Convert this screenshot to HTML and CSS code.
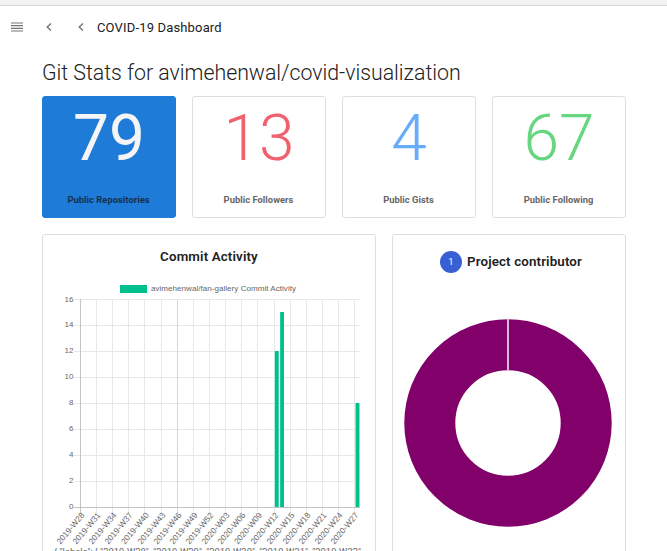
FILE: index.html
```
<!DOCTYPE html>
<html lang="en">
<head>
<meta charset="utf-8">
<title>COVID-19 Dashboard</title>
<link rel="stylesheet" href="styles.css">
</head>
<body>
<header class="bar">
  <svg class="menu" width="12" height="10" viewBox="0 0 12 10"><path d="M0 1h12M0 3.700h12M0 6.300h12M0 9h12"/></svg>
  <svg class="chev" width="6" height="8" viewBox="0 0 6 8"><path d="M5 .5L1.2 4 5 7.5"/></svg>
  <svg class="chev" width="6" height="8" viewBox="0 0 6 8"><path d="M5 .5L1.2 4 5 7.5"/></svg>
  <span class="name">COVID-19 Dashboard</span>
</header>
<main>
  <h1>Git Stats for avimehenwal/covid-visualization</h1>
  <section class="stats">
    <article class="card stat repos"><strong>79</strong><span>Public Repositories</span></article>
    <article class="card stat followers"><strong>13</strong><span>Public Followers</span></article>
    <article class="card stat gists"><strong>4</strong><span>Public Gists</span></article>
    <article class="card stat following"><strong>67</strong><span>Public Following</span></article>
  </section>
  <section class="charts">
    <article class="card commits">
      <h2>Commit Activity</h2>
      <svg class="plot" width="332" height="265" viewBox="43 280 332 265">
        <rect class="green" x="120" y="285" width="27" height="8"/>
        <text x="151" y="291.4" textLength="145">avimehenwal/fan-gallery Commit Activity</text>
        <path class="grid" d="M74 299.5H360M74 325.5H360M74 351.5H360M74 377.5H360M74 403.5H360M74 429.5H360M74 455.5H360M74 481.5H360M96.5 299V513M112.5 299V513M128.5 299V513M144.5 299V513M161.5 299V513M193.5 299V513M209.5 299V513M225.5 299V513M241.5 299V513M257.5 299V513M274.5 299V513M290.5 299V513M306.5 299V513M322.5 299V513M338.5 299V513M354.5 299V513"/>
        <path class="grid mid" d="M177.5 299V513"/>
        <path class="grid axis" d="M80.5 299V513M74 507.5H360"/>
        <path class="halo" d="M274 351h5v156h-5zM280 312h4v195h-4zM355 403h5v104h-5z"/>
        <path class="green" d="M275 351h3.6v156H275zM280.2 312h3.8v195h-3.8zM355.8 403h3.4v104h-3.4z"/>
        <g class="ticks">
          <text x="73.500" y="302">16</text><text x="73.500" y="327">14</text><text x="73.500" y="353">12</text><text x="73.500" y="379">10</text><text x="73.500" y="405">8</text><text x="73.500" y="431">6</text><text x="73.500" y="457">4</text><text x="73.500" y="483">2</text><text x="73.500" y="509">0</text>
        </g>
        <g class="ticks weeks">
          <text transform="translate(85 515.500) rotate(-50)">2019-W28</text>
          <text transform="translate(101 515.500) rotate(-50)">2019-W31</text>
          <text transform="translate(117 515.500) rotate(-50)">2019-W34</text>
          <text transform="translate(133 515.500) rotate(-50)">2019-W37</text>
          <text transform="translate(149.500 515.500) rotate(-50)">2019-W40</text>
          <text transform="translate(166 515.500) rotate(-50)">2019-W43</text>
          <text transform="translate(182 515.500) rotate(-50)">2019-W46</text>
          <text transform="translate(198 515.500) rotate(-50)">2019-W49</text>
          <text transform="translate(214 515.500) rotate(-50)">2019-W52</text>
          <text transform="translate(230 515.500) rotate(-50)">2020-W03</text>
          <text transform="translate(246 515.500) rotate(-50)">2020-W06</text>
          <text transform="translate(262.500 515.500) rotate(-50)">2020-W09</text>
          <text transform="translate(279 515.500) rotate(-50)">2020-W12</text>
          <text transform="translate(295 515.500) rotate(-50)">2020-W15</text>
          <text transform="translate(311 515.500) rotate(-50)">2020-W18</text>
          <text transform="translate(327 515.500) rotate(-50)">2020-W21</text>
          <text transform="translate(343 515.500) rotate(-50)">2020-W24</text>
          <text transform="translate(359 515.500) rotate(-50)">2020-W27</text>
        </g>
      </svg>
      <p class="data">{ "labels": [ "2019-W28", "2019-W29", "2019-W30", "2019-W31", "2019-W32",</p>
    </article>
    <article class="card people">
      <h2><span class="badge">1</span>Project contributor</h2>
      <svg class="donut" width="208" height="208" viewBox="0 0 208 208">
        <circle class="ring" cx="104" cy="104" r="78.200"/>
        <path class="seam" d="M104 0V52"/>
      </svg>
    </article>
  </section>
</main>
</body>
</html>
```
FILE: styles.css
```
* { box-sizing: border-box; }
body {
  margin: 0;
  height: 551px;
  overflow: hidden;
  background: #fff;
  border-top: 5px solid #f2f2f2;
  font-family: Roboto, sans-serif;
  color: #212121;
}
.bar {
  display: flex;
  align-items: center;
  height: 44px;
  padding: 0 0 0 11px;
  border-top: 1px solid #d5d5d5;
}
.bar svg { fill: none; stroke: #757575; }
.menu { stroke-width: 1.2; margin: 0 23px 1px 0; }
.chev { stroke-width: 1.4; margin: 0 26px 1px 0; }
.chev + .name { margin-left: -13px; }
.name { font-size: 13px; line-height: 18px; letter-spacing: .16px; }
main { padding: 8px 41px 0 42px; }
h1 {
  margin: 0;
  height: 39px;
  font-size: 21.33px;
  line-height: 32px;
  font-weight: 300;
  letter-spacing: -.025px;
  white-space: nowrap;
}
.card { border: 1px solid #dedede; border-radius: 3px; background: #fff; }
.stats { display: grid; grid-template-columns: repeat(4, 134px); gap: 16px; }
.stat {
  display: flex;
  flex-direction: column;
  align-items: center;
  justify-content: space-between;
  height: 122px;
  padding: 4px 0 10px;
}
.stat strong { font-size: 64px; line-height: 76px; font-weight: 300; }
.stat span { margin-right: 1px; font-size: 9.33px; line-height: 14px; font-weight: 700; letter-spacing: .04px; color: #666; }
.repos { background: #1f7bd8; border-color: #1f7bd8; }
.repos strong { color: #f5f5f5; font-weight: 400; }
.repos span { color: #15304e; }
.followers strong { color: #f0616d; }
.gists strong { color: #67acfb; }
.following strong { color: #66d680; }
.charts { display: grid; grid-template-columns: 334px 234px; gap: 16px; margin-top: 16px; }
.charts .card { height: 340px; }
h2 {
  display: flex;
  align-items: center;
  justify-content: center;
  margin: 0;
  font-size: 13.33px;
  line-height: 22px;
  font-weight: 600;
  letter-spacing: .14px;
}
.commits h2 { padding-top: 11px; height: 45px; align-items: flex-start; }
.plot { display: block; font: 8px "Liberation Sans", sans-serif; fill: #666; }
.green { fill: #00c08b; }
.halo { fill: #b0e9d9; }
.grid { fill: none; stroke: #e8e8e8; }
.mid { stroke: #d6d6d6; }
.axis { stroke: #c4c4c4; }
.ticks { text-anchor: end; }
.weeks { font-size: 8.3px; }
.data { margin: 0 0 0 11px; font-size: 9.33px; line-height: 14px; letter-spacing: .05px; white-space: nowrap; color: #666; }
.people { display: flex; flex-direction: column; align-items: center; }
.people h2 { margin-top: 16px; padding-left: 4px; gap: 5px; }
.badge {
  width: 22px;
  height: 22px;
  border-radius: 50%;
  background: #3860d4;
  color: #fff;
  font-size: 9.33px;
  font-weight: 400;
  text-align: center;
}
.donut { margin: 46px 2px 0 0; }
.ring { fill: none; stroke: #82006a; stroke-width: 51px; }
.seam { stroke: #dfb8d8; stroke-width: 2px; }
```
